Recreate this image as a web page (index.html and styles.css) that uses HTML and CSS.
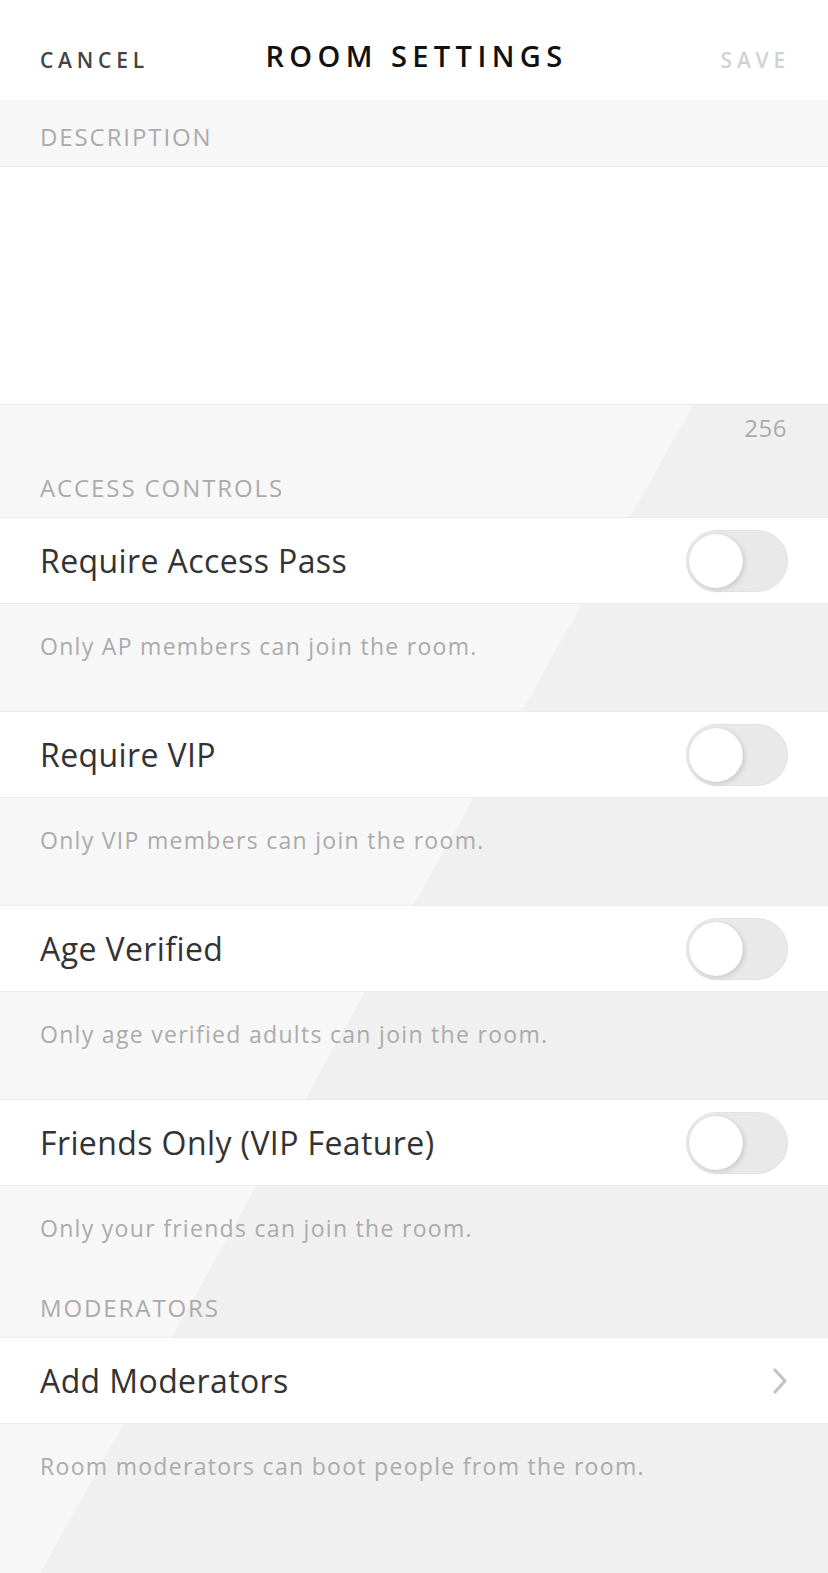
FILE: index.html
```html
<!DOCTYPE html>
<html lang="en">
  <head>
    <meta charset="UTF-8" />
    <meta name="viewport" content="width=device-width, initial-scale=1.0" />
    <title>Room Settings</title>
    <link rel="stylesheet" href="styles.css">
  </head>
  <body>
    <div class="screen">
      <header class="topbar">
        <button class="bar-btn cancel-btn">CANCEL</button>
        <h1 class="title">ROOM SETTINGS</h1>
        <button class="bar-btn save-btn" disabled>SAVE</button>
      </header>

      <div class="section-label first">DESCRIPTION</div>
      <div class="desc-box">
        <textarea class="desc-input" maxlength="256"></textarea>
      </div>
      <div class="counter">256</div>

      <div class="section-label">ACCESS CONTROLS</div>

      <div class="row">
        <span class="row-text">Require Access Pass</span>
        <label class="toggle"><input type="checkbox" /><span class="knob"></span></label>
      </div>
      <div class="note">Only AP members can join the room.</div>

      <div class="row">
        <span class="row-text">Require VIP</span>
        <label class="toggle"><input type="checkbox" /><span class="knob"></span></label>
      </div>
      <div class="note">Only VIP members can join the room.</div>

      <div class="row">
        <span class="row-text">Age Verified</span>
        <label class="toggle"><input type="checkbox" /><span class="knob"></span></label>
      </div>
      <div class="note">Only age verified adults can join the room.</div>

      <div class="row">
        <span class="row-text">Friends Only (VIP Feature)</span>
        <label class="toggle"><input type="checkbox" /><span class="knob"></span></label>
      </div>
      <div class="note">Only your friends can join the room.</div>

      <div class="section-label after-note">MODERATORS</div>

      <div class="row link-row">
        <span class="row-text">Add Moderators</span>
        <svg class="chevron" width="16" height="26" viewBox="0 0 16 26">
          <path d="M3 2 L13 13 L3 24" fill="none" stroke="#c4c4c4" stroke-width="3.2" stroke-linecap="round" stroke-linejoin="round" />
        </svg>
      </div>
      <div class="note last">Room moderators can boot people from the room.</div>
    </div>
  </body>
</html>
```

FILE: styles.css
```css
body {
  margin: 0;
  font-family: "Open Sans", "Noto Sans", sans-serif;
  background-color: #f0f0f0;
}
.screen {
  width: 828px;
  min-height: 1573px;
  display: flex;
  flex-direction: column;
  background: linear-gradient(119.2deg, #f7f7f7 53.8%, #f0f0f0 53.9%);
}
.topbar {
  height: 100px;
  background-color: white;
  display: grid;
  grid-template-columns: 1fr auto 1fr;
  align-items: center;
  padding: 0 40px;
  box-sizing: border-box;
}
.bar-btn {
  background: none;
  border: none;
  padding: 0;
  font-family: inherit;
  font-size: 21px;
  font-weight: 600;
  line-height: 30px;
  letter-spacing: 4.8px;
  margin-top: 20px;
  cursor: pointer;
}
.cancel-btn {
  justify-self: start;
  color: #444;
}
.save-btn {
  justify-self: end;
  color: #d2d2d2;
  letter-spacing: 4.8px;
  margin-right: -2px;
}
.title {
  margin: 12px -5px 0 0;
  font-size: 29px;
  font-weight: 600;
  line-height: 30px;
  letter-spacing: 5.4px;
  color: #111;
}
.section-label {
  padding: 30px 40px 14px;
  font-size: 24px;
  line-height: 30px;
  letter-spacing: 1.9px;
  color: #ababab;
}
.section-label.first {
  padding-top: 22px;
  background-color: #f7f7f7;
}
.section-label.after-note {
  padding-top: 0;
}
.desc-box {
  background-color: white;
  border-top: 1px solid #ebebeb;
  border-bottom: 1px solid #ebebeb;
}
.desc-input {
  display: block;
  width: 100%;
  height: 237px;
  border: none;
  resize: none;
  outline: none;
  background: transparent;
  box-sizing: border-box;
}
.counter {
  padding: 8px 41px 0;
  text-align: right;
  font-size: 24px;
  line-height: 30px;
  letter-spacing: 0.5px;
  color: #ababab;
}
.row {
  height: 85px;
  background-color: white;
  border-top: 1px solid #ececec;
  border-bottom: 1px solid #ececec;
  display: flex;
  align-items: center;
  justify-content: space-between;
  padding: 0 40px;
}
.row-text {
  font-size: 32px;
  letter-spacing: 0.4px;
  color: #333;
}
.note {
  padding: 27px 40px 50px;
  font-size: 23px;
  line-height: 30px;
  color: #ababab;
  letter-spacing: 1.3px;
}
.note.last {
  flex: 1;
}
.toggle {
  position: relative;
  width: 102px;
  height: 62px;
  box-sizing: border-box;
  border-radius: 31px;
  background-color: #e9e9e9;
  border: 1px solid #e2e2e2;
  cursor: pointer;
}
.toggle input {
  display: none;
}
.knob {
  position: absolute;
  top: 3px;
  left: 2px;
  width: 54px;
  height: 54px;
  border-radius: 50%;
  background-color: white;
  box-shadow: 2px 2px 5px rgba(0, 0, 0, 0.12), 0 0 1px rgba(0, 0, 0, 0.15);
}
.chevron {
  margin-right: 0;
}
```
